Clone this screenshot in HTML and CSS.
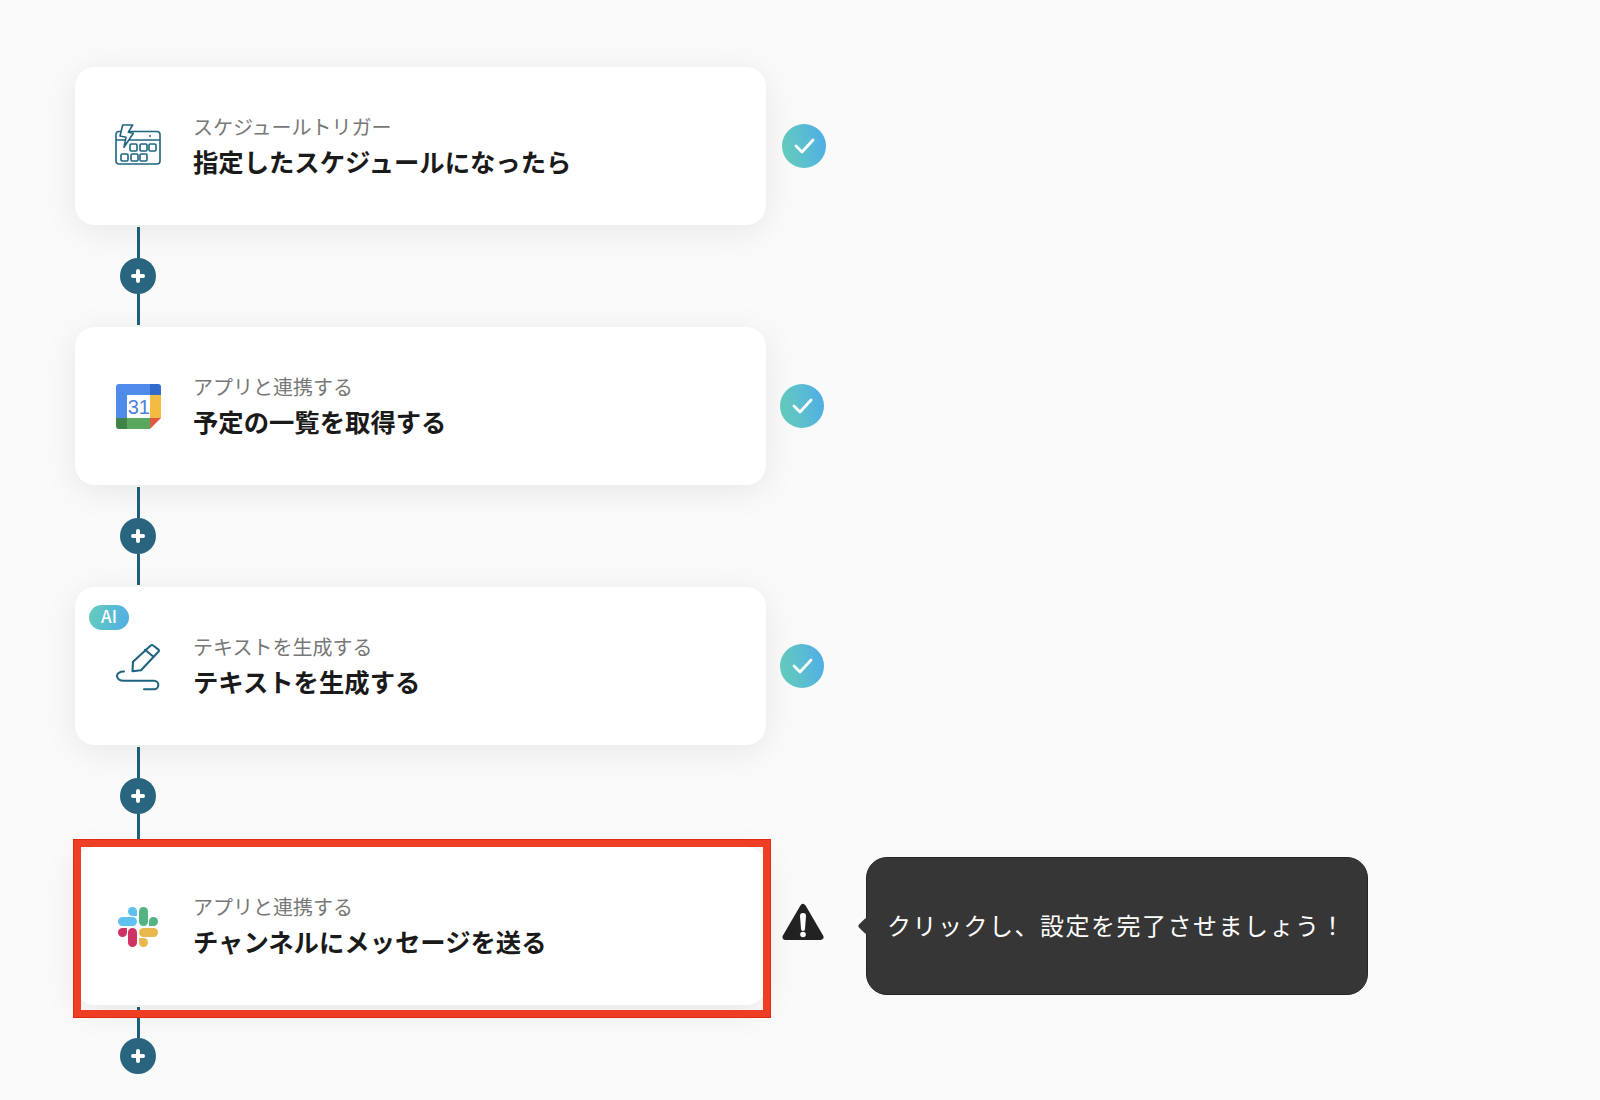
FILE: index.html
```html
<!DOCTYPE html>
<html lang="ja">
<head>
    <meta charset="UTF-8">
    <meta name="viewport" content="width=device-width, initial-scale=1.0">
    <title>フローボット</title>
    <link rel="stylesheet" href="styles.css">
</head>
<body>
    <main class="flow">
        <div class="step">
            <div class="card">
                <svg class="card-icon" viewBox="0 1 46 42" fill="none" stroke="#1f6480" stroke-width="1.6" stroke-linejoin="round">
                    <rect x="1" y="7.5" width="44" height="32.5" rx="3"/>
                    <path d="M1 16h44"/>
                    <circle cx="35" cy="12" r="1" fill="#1f6480" stroke="none"/>
                    <rect x="15" y="20" width="7" height="7" rx="1.2" fill="#fff"/>
                    <rect x="25" y="20" width="7" height="7" rx="1.2"/>
                    <rect x="34" y="20" width="7" height="7" rx="1.2"/>
                    <rect x="6" y="30" width="7" height="7" rx="1.2"/>
                    <rect x="16" y="30" width="7" height="7" rx="1.2"/>
                    <rect x="25" y="30" width="7" height="7" rx="1.2"/>
                    <path d="M7.7 1h10l-4.4 7.2 5 1-9.300 14.100 2-10-6-1.300z" fill="#fff"/>
                </svg>
                <div class="card-text">
                    <div class="card-label">スケジュールトリガー</div>
                    <div class="card-title">指定したスケジュールになったら</div>
                </div>
            </div>
            <svg class="status status-first" viewBox="0 0 44 44">
                <defs>
                    <linearGradient id="checkGrad" x1="0" y1="0.6" x2="1" y2="0.4">
                        <stop offset="0" stop-color="#66cdbb"/>
                        <stop offset="1" stop-color="#50aee6"/>
                    </linearGradient>
                </defs>
                <circle cx="22" cy="22" r="22" fill="url(#checkGrad)"/>
                <path d="M14 22l6 6 11-12" fill="none" stroke="#fff" stroke-width="2.800" stroke-linecap="round" stroke-linejoin="round"/>
            </svg>
        </div>

        <div class="connector">
            <span class="line"></span>
            <span class="add"></span>
            <span class="line"></span>
        </div>

        <div class="step">
            <div class="card">
                <svg class="card-icon" viewBox="-1 -1 46 46">
                    <path d="M3 0h31v11H11v23H0V3a3 3 0 0 1 3-3z" fill="#4f8be8"/>
                    <path d="M34 0h8a3 3 0 0 1 3 3v8H34z" fill="#2f6ccb"/>
                    <path d="M34 11h11v23H34z" fill="#f2bc42"/>
                    <path d="M11 34h23v11H11z" fill="#5aa860"/>
                    <path d="M0 34h11v11H3a3 3 0 0 1-3-3z" fill="#3f8348"/>
                    <path d="M34 34h11L34 45z" fill="#df5a3e"/>
                    <text class="gcal-date" x="22.800" y="30" text-anchor="middle">31</text>
                </svg>
                <div class="card-text">
                    <div class="card-label">アプリと連携する</div>
                    <div class="card-title">予定の一覧を取得する</div>
                </div>
            </div>
            <svg class="status" viewBox="0 0 44 44">
                <circle cx="22" cy="22" r="22" fill="url(#checkGrad)"/>
                <path d="M14 22l6 6 11-12" fill="none" stroke="#fff" stroke-width="2.800" stroke-linecap="round" stroke-linejoin="round"/>
            </svg>
        </div>

        <div class="connector">
            <span class="line"></span>
            <span class="add"></span>
            <span class="line"></span>
        </div>

        <div class="step">
            <div class="card">
                <span class="ai-badge">AI</span>
                <svg class="card-icon" viewBox="-1 -1 46 46" fill="none" stroke="#1f6480" stroke-width="2.100" stroke-linecap="round" stroke-linejoin="round">
                    <path d="M34.700 1.500c.8-.6 1.700-.6 2.500 0l5 3.800c.8.700.9 1.700.2 2.500L25 26.200l-8.500 1 .5-9.500z"/>
                    <path d="M29 5.800l8.500 7"/>
                    <path d="M8 27.500C3.500 27.500 1 29.500 1 32s2.500 4.700 7 4.700h30c2.500 0 4.300 2 4.300 4.300s-1.800 4.300-4.300 4.300H28"/>
                </svg>
                <div class="card-text">
                    <div class="card-label">テキストを生成する</div>
                    <div class="card-title">テキストを生成する</div>
                </div>
            </div>
            <svg class="status" viewBox="0 0 44 44">
                <circle cx="22" cy="22" r="22" fill="url(#checkGrad)"/>
                <path d="M14 22l6 6 11-12" fill="none" stroke="#fff" stroke-width="2.800" stroke-linecap="round" stroke-linejoin="round"/>
            </svg>
        </div>

        <div class="connector">
            <span class="line"></span>
            <span class="add"></span>
            <span class="line"></span>
        </div>

        <div class="step step-flagged">
            <div class="card">
                <svg class="card-icon" viewBox="-3 -1 46 40">
                    <path d="M19 9h-4.500a4.500 4.500 0 1 1 4.500-4.500z" fill="#5fc2ee"/>
                    <rect x="0" y="10" width="19" height="9" rx="4.500" fill="#5fc2ee"/>
                    <rect x="21" y="0" width="9" height="19" rx="4.500" fill="#53b383"/>
                    <path d="M31 19v-4.500a4.500 4.500 0 1 1 4.500 4.500z" fill="#53b383"/>
                    <rect x="21" y="21" width="19" height="9" rx="4.500" fill="#e8b84c"/>
                    <path d="M21 31h4.500a4.500 4.500 0 1 1-4.500 4.500z" fill="#e8b84c"/>
                    <rect x="10" y="21" width="9" height="19" rx="4.500" fill="#cf3362"/>
                    <path d="M9 21v4.500a4.500 4.500 0 1 1-4.500-4.500z" fill="#cf3362"/>
                </svg>
                <div class="card-text">
                    <div class="card-label">アプリと連携する</div>
                    <div class="card-title">チャンネルにメッセージを送る</div>
                </div>
                <span class="flag-frame"></span>
            </div>
            <svg class="warning" viewBox="0 0 42 38">
                <path d="M21 4L38.500 34H3.500z" fill="#222" stroke="#222" stroke-width="6" stroke-linejoin="round"/>
                <path d="M18 13a3 3 0 0 1 6 0l-1 13a2 2 0 0 1-4 0z" fill="#fff"/>
                <circle cx="21" cy="31.500" r="2.800" fill="#fff"/>
            </svg>
            <div class="tooltip">クリックし、設定を完了させましょう！</div>
        </div>

        <div class="connector connector-end">
            <span class="line"></span>
            <span class="add"></span>
        </div>
    </main>
</body>
</html>
```

FILE: styles.css
```css
body {
    margin: 0;
    background-color: #fafafa;
    height: 1100px;
    overflow: hidden;
    font-family: "Noto Sans CJK JP", "Noto Sans", sans-serif;
}

.flow {
    display: flex;
    flex-direction: column;
    padding: 66px 0 0 75px;
}

.step {
    position: relative;
    z-index: 1;
    display: flex;
    align-items: center;
    height: 160px;
}

.card {
    position: relative;
    display: flex;
    align-items: center;
    box-sizing: border-box;
    width: 691px;
    height: 158.5px;
    padding-left: 40px;
    background: #fff;
    border-radius: 20px;
    box-shadow: 0 6px 34px rgba(0, 0, 0, 0.08);
}

.card-icon {
    flex: none;
    width: 46px;
    height: 46px;
    margin-right: 32px;
    overflow: visible;
}

.gcal-date {
    font-family: "Liberation Sans", sans-serif;
    font-size: 20px;
    fill: #4a82e0;
}

.card-text {
    display: flex;
    flex-direction: column;
    margin-top: -3px;
}

.card-label {
    font-size: 20px;
    line-height: 32px;
    color: #777;
}

.card-title {
    font-size: 25.35px;
    line-height: 36px;
    font-weight: 700;
    color: #1a1a1a;
}

.ai-badge {
    position: absolute;
    top: 18px;
    left: 14px;
    width: 40px;
    height: 25px;
    border-radius: 13px;
    background: linear-gradient(100deg, #66cdbb, #50aee6);
    color: #fff;
    font-size: 17px;
    font-weight: 500;
    line-height: 22px;
    text-align: center;
}

.status {
    flex: none;
    width: 44px;
    height: 44px;
    margin-left: 14px;
}

.status-first {
    margin-left: 16px;
}

.warning {
    flex: none;
    width: 42px;
    height: 38px;
    margin-left: 16px;
    margin-top: -8px;
}

.tooltip {
    position: relative;
    display: flex;
    align-items: center;
    box-sizing: border-box;
    width: 502px;
    height: 138px;
    margin-left: 42px;
    padding: 0 0 4px 20px;
    background: #363636;
    border: 1px solid #262626;
    border-radius: 21px;
    color: #fff;
    font-size: 24px;
    letter-spacing: 1.5px;
    white-space: nowrap;
}

.tooltip::before {
    content: '';
    position: absolute;
    top: 50%;
    left: -7px;
    width: 12px;
    height: 12px;
    background: #363636;
    border-radius: 2px;
    transform: translateY(-50%) rotate(45deg);
}

.flag-frame {
    position: absolute;
    top: -7.75px;
    left: -2px;
    right: -5px;
    bottom: -12.75px;
    border: 8px solid #ee3f24;
    outline: 1px solid #e22a12;
    outline-offset: -1px;
    pointer-events: none;
}

.connector {
    display: flex;
    flex-direction: column;
    align-items: center;
    width: 36px;
    height: 100px;
    margin-left: 45px;
}

.connector-end {
    height: 68px;
}

.line {
    flex: 1;
    width: 3px;
    background: #1c6080;
}

.connector .line:first-child {
    margin-top: 1px;
}

.connector .line:last-child {
    margin-bottom: 1px;
}

.add {
    position: relative;
    flex: none;
    width: 36px;
    height: 36px;
    border-radius: 50%;
    background: #2a6580;
}

.add::before,
.add::after {
    content: '';
    position: absolute;
    top: 50%;
    left: 50%;
    background: #fff;
    border-radius: 2px;
    transform: translate(-50%, -50%);
}

.add::before {
    width: 14px;
    height: 4px;
}

.add::after {
    width: 4px;
    height: 14px;
}
```
